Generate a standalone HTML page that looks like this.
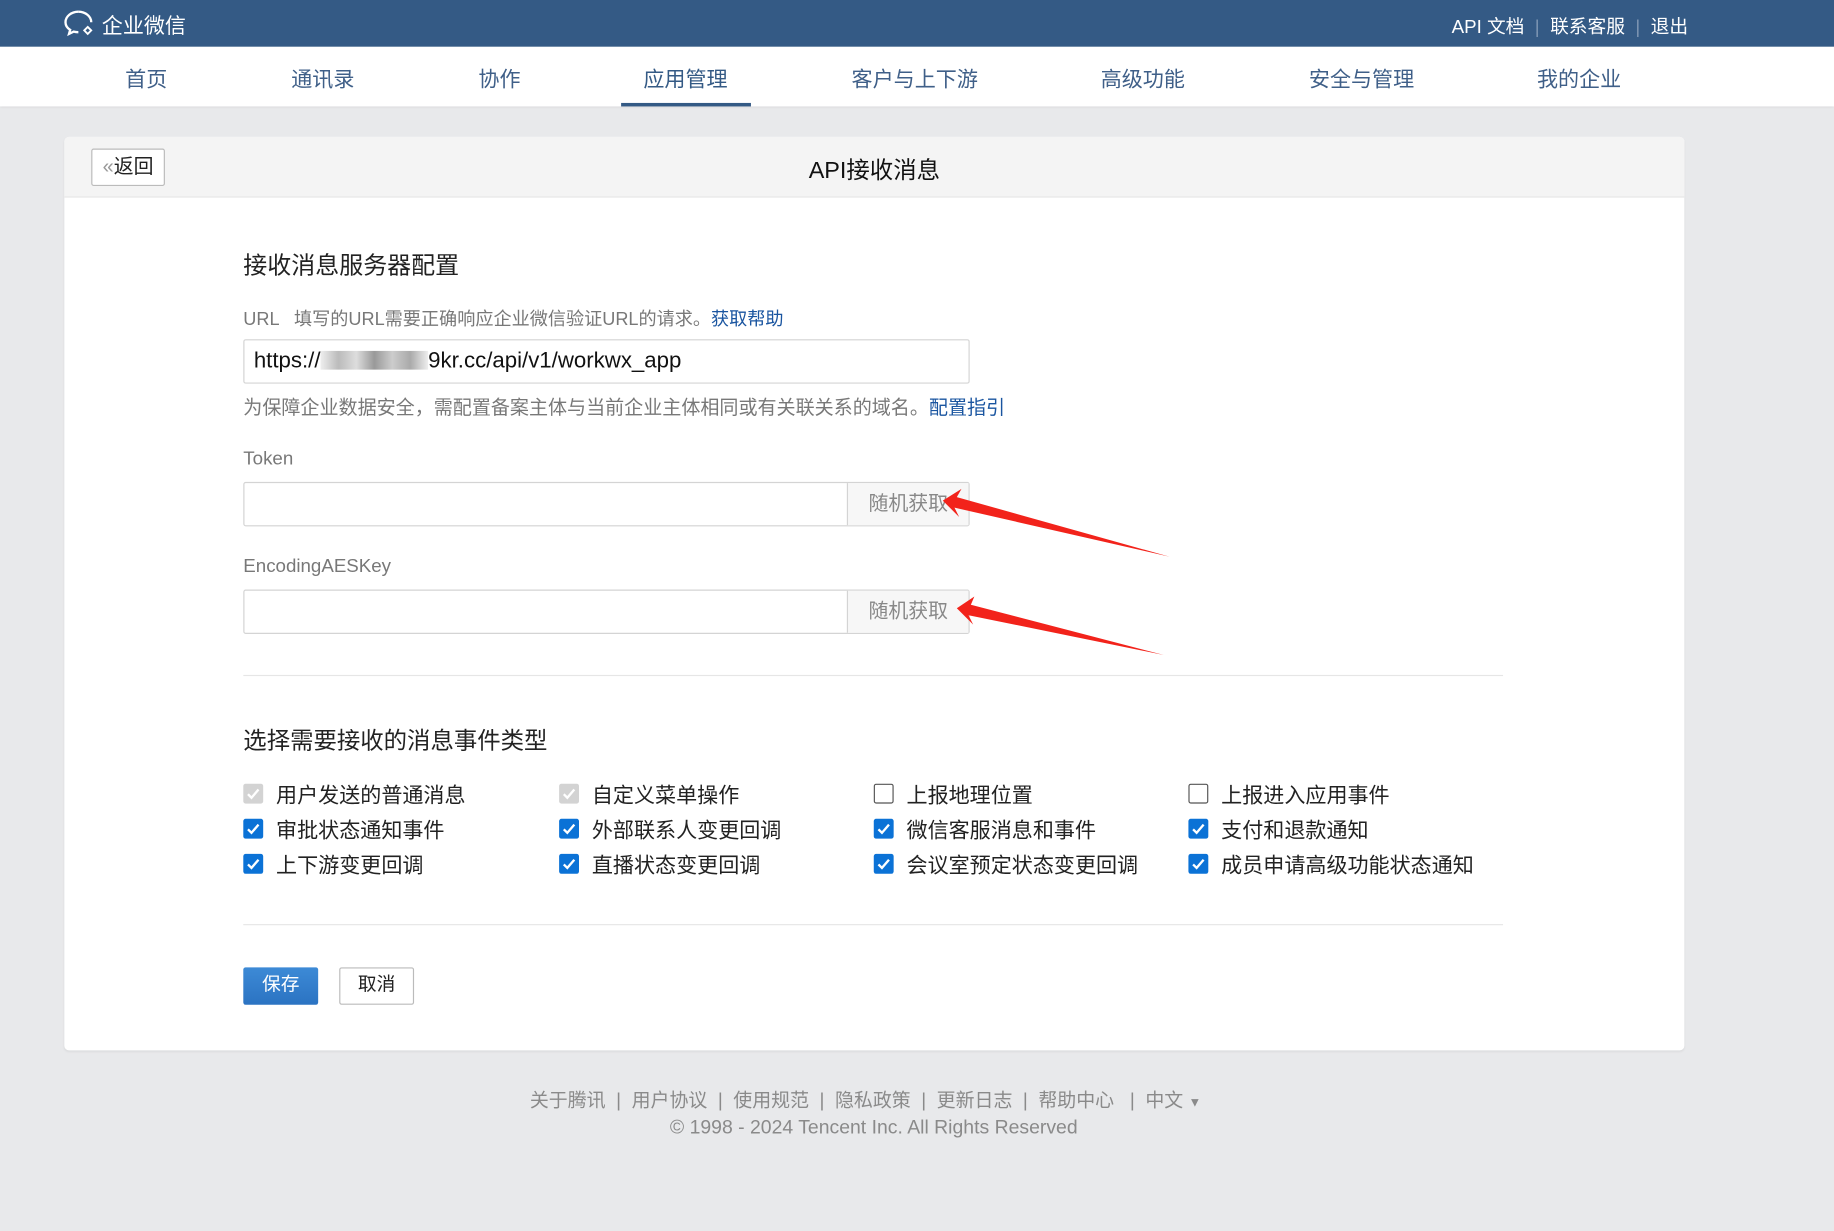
<!DOCTYPE html>
<html><head><meta charset="utf-8"><style>
html,body{margin:0;padding:0;width:1834px;height:1230px;overflow:hidden;background:#e8e9eb}
#w{position:absolute;left:0;top:0;width:1568px;height:1052px;transform:scale(1.1697);transform-origin:0 0;font-family:"Liberation Sans","Noto Sans CJK SC",sans-serif;background:#e8e9eb}
.a{position:absolute;white-space:nowrap}
.top{position:absolute;left:0;top:0;width:1568px;height:40px;background:#345a85}
.nav{position:absolute;left:0;top:40px;width:1568px;height:51px;background:#fff;box-shadow:0 1px 2px rgba(0,0,0,.08)}
.nav span{position:absolute;top:14px;font-size:18px;color:#3f5f88;transform:translateX(-50%)}
.card{position:absolute;left:55px;top:117px;width:1385px;height:781px;background:#fff;border-radius:4px;box-shadow:0 1px 2px rgba(0,0,0,.06)}
.hd{position:absolute;left:0;top:0;width:1385px;height:51px;background:#f4f4f4;border-bottom:1px solid #e3e3e3;border-radius:4px 4px 0 0}
.lbl{font-size:15.5px;color:#787878}
.inp{position:absolute;left:208px;width:619px;height:36px;border:1px solid #d4d4d4;border-radius:2px;background:#fff}
.btn{position:absolute;right:0;top:0;width:103px;height:36px;background:#f7f7f7;border-left:1px solid #d4d4d4;font-size:17px;color:#888;text-align:center;line-height:36px}
.cb{position:absolute;font-size:18px;color:#222}
.cb i{position:absolute;left:0;top:4px;width:17px;height:17px;border-radius:2px;box-sizing:border-box}
.cb i.on{background:#0b72d6}
.cb i.dis{background:#d3d3d3}
.cb i.off{border:1.5px solid #555;background:#fff}
.cb i svg{position:absolute;left:2px;top:2px}
.cb b{font-weight:normal;margin-left:28px}
.hr{position:absolute;left:208px;width:1077px;height:1px;background:#e6e6e6}
.ft{font-size:16.2px;color:#8a8a8a}
</style></head><body><div id="w">
<div class="top">
<svg class="a" style="left:54px;top:7px" width="30" height="26" viewBox="0 0 30 26"><path d="M13 3C7 3 2 7 2 12c0 3 1.5 5 4 6.5L5 22l4-2c1.2.3 2.5.5 4 .5" fill="none" stroke="#fff" stroke-width="2"/><path d="M13 3c6 0 11 4 11 9" fill="none" stroke="#fff" stroke-width="2"/><path d="M21 16l3 3-3 3-3-3z" fill="none" stroke="#fff" stroke-width="1.6"/></svg>
<div class="a" style="left:87px;top:8px;font-size:18px;color:#fff">企业微信</div>
<div class="a" style="left:1241px;top:9px;font-size:16px;color:#fff">API 文档 <span style="color:#7d95b3">&nbsp;|&nbsp;</span> 联系客服 <span style="color:#7d95b3">&nbsp;|&nbsp;</span> 退出</div>
</div>
<div class="nav">
<span style="left:125px">首页</span><span style="left:276px">通讯录</span><span style="left:427px">协作</span><span style="left:586px;color:#345a85">应用管理</span><span style="left:782px">客户与上下游</span><span style="left:977px">高级功能</span><span style="left:1164px">安全与管理</span><span style="left:1350px">我的企业</span>
<div class="a" style="left:531px;top:48px;width:111px;height:3px;background:#345a85"></div>
</div>
<div class="card"><div class="hd">
<div class="a" style="left:23px;top:10px;width:61px;height:30px;border:1px solid #bbb;border-radius:2px;background:#fff;font-size:17px;line-height:30px;text-align:center;color:#222"><span style="color:#999">«</span>返回</div>
<div class="a" style="left:0;width:1385px;text-align:center;top:12px;font-size:20px;color:#111">API接收消息</div>
</div></div>
<div class="a" style="left:208px;top:210px;font-size:20.5px;color:#222">接收消息服务器配置</div>
<div class="a lbl" style="left:208px;top:261px">URL &nbsp; 填写的URL需要正确响应企业微信验证URL的请求。<span style="color:#1a55a0">获取帮助</span></div>
<div class="inp" style="top:290px"><div class="a" style="left:8px;top:7px;font-size:19px;color:#111">https://<span style="display:inline-block;width:92px;height:16px;background:linear-gradient(90deg,#eee,#bbb,#ddd,#999,#ccc,#aaa,#eee);vertical-align:-2px"></span>9kr.cc/api/v1/workwx_app</div></div>
<div class="a" style="left:208px;top:335px;font-size:16.3px;color:#787878">为保障企业数据安全，需配置备案主体与当前企业主体相同或有关联关系的域名。<span style="color:#1a55a0">配置指引</span></div>
<div class="a" style="left:208px;top:384px;font-size:16px;color:#787878">Token</div>
<div class="inp" style="top:412px"><div class="btn">随机获取</div></div>
<div class="a" style="left:208px;top:476px;font-size:16px;color:#787878">EncodingAESKey</div>
<div class="inp" style="top:504px"><div class="btn">随机获取</div></div>
<div class="hr" style="top:577px"></div>
<div class="a" style="left:208px;top:617px;font-size:20px;color:#222">选择需要接收的消息事件类型</div>
<div class="cb" style="left:208px;top:666px"><i class="dis"><svg width="13" height="13"><path d="M2 7l3 3 6-7" stroke="#fff" stroke-width="2" fill="none"/></svg></i><b>用户发送的普通消息</b></div>
<div class="cb" style="left:478px;top:666px"><i class="dis"><svg width="13" height="13"><path d="M2 7l3 3 6-7" stroke="#fff" stroke-width="2" fill="none"/></svg></i><b>自定义菜单操作</b></div>
<div class="cb" style="left:747px;top:666px"><i class="off"></i><b>上报地理位置</b></div>
<div class="cb" style="left:1016px;top:666px"><i class="off"></i><b>上报进入应用事件</b></div>
<div class="cb" style="left:208px;top:696px"><i class="on"><svg width="13" height="13"><path d="M2 7l3 3 6-7" stroke="#fff" stroke-width="2" fill="none"/></svg></i><b>审批状态通知事件</b></div>
<div class="cb" style="left:478px;top:696px"><i class="on"><svg width="13" height="13"><path d="M2 7l3 3 6-7" stroke="#fff" stroke-width="2" fill="none"/></svg></i><b>外部联系人变更回调</b></div>
<div class="cb" style="left:747px;top:696px"><i class="on"><svg width="13" height="13"><path d="M2 7l3 3 6-7" stroke="#fff" stroke-width="2" fill="none"/></svg></i><b>微信客服消息和事件</b></div>
<div class="cb" style="left:1016px;top:696px"><i class="on"><svg width="13" height="13"><path d="M2 7l3 3 6-7" stroke="#fff" stroke-width="2" fill="none"/></svg></i><b>支付和退款通知</b></div>
<div class="cb" style="left:208px;top:726px"><i class="on"><svg width="13" height="13"><path d="M2 7l3 3 6-7" stroke="#fff" stroke-width="2" fill="none"/></svg></i><b>上下游变更回调</b></div>
<div class="cb" style="left:478px;top:726px"><i class="on"><svg width="13" height="13"><path d="M2 7l3 3 6-7" stroke="#fff" stroke-width="2" fill="none"/></svg></i><b>直播状态变更回调</b></div>
<div class="cb" style="left:747px;top:726px"><i class="on"><svg width="13" height="13"><path d="M2 7l3 3 6-7" stroke="#fff" stroke-width="2" fill="none"/></svg></i><b>会议室预定状态变更回调</b></div>
<div class="cb" style="left:1016px;top:726px"><i class="on"><svg width="13" height="13"><path d="M2 7l3 3 6-7" stroke="#fff" stroke-width="2" fill="none"/></svg></i><b>成员申请高级功能状态通知</b></div>
<div class="hr" style="top:790px"></div>
<div class="a" style="left:208px;top:827px;width:64px;height:32px;background:linear-gradient(#3d8ad6,#2b73c2);border-radius:2px;color:#fff;font-size:16px;line-height:32px;text-align:center">保存</div>
<div class="a" style="left:290px;top:827px;width:62px;height:30px;border:1px solid #bbb;border-radius:2px;background:#fff;color:#222;font-size:16px;line-height:30px;text-align:center">取消</div>
<svg class="a" style="left:0;top:0" width="1568" height="1052"><polygon points="806,428 822,418 818,425 1000,476 816,434 820,442" fill="#f2231b"/><polygon points="818,520 833,510 830,517 995,560 828,526 832,534" fill="#f2231b"/></svg>
<div class="a ft" style="left:453px;top:927px">关于腾讯 &nbsp;| &nbsp;用户协议 &nbsp;| &nbsp;使用规范 &nbsp;| &nbsp;隐私政策 &nbsp;| &nbsp;更新日志 &nbsp;| &nbsp;帮助中心 &nbsp; | &nbsp;中文 <span style="font-size:11px">▼</span></div>
<div class="a ft" style="left:0;width:1494px;text-align:center;top:954px;font-size:16.6px">© 1998 - 2024 Tencent Inc. All Rights Reserved</div>
</div></body></html>
